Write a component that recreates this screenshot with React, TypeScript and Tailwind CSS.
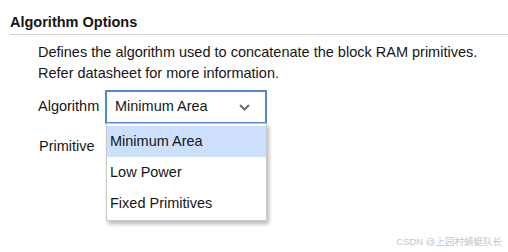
import { useState } from "react";

const options = ["Minimum Area", "Low Power", "Fixed Primitives"];

function Chevron() {
    return (
        <svg width="11" height="7" viewBox="0 0 11 7" fill="none">
            <path d="M1 1l4.5 4.5L10 1" stroke="#6b6b6b" strokeWidth="2" />
        </svg>
    );
}

export default function App() {
    const [algorithm] = useState("Minimum Area");

    return (
        <div className="relative w-[508px] h-[252px] bg-white text-[#161616] font-['Liberation_Sans',Arial,sans-serif] overflow-hidden">
            {/* Section header */}
            <div className="px-[10px] pt-[14px]">
                <h2 className="text-[14.5px] leading-[16px] font-bold">Algorithm Options</h2>
                <div className="mt-[4px] border-t border-[#d3d3d3] -mr-[10px]" />
            </div>

            <div className="pl-[38px] pt-[7px] text-[14.5px]">
                <p className="leading-[21px]">
                    Defines the algorithm used to concatenate the block RAM primitives.
                    <br />
                    Refer datasheet for more information.
                </p>

                <div className="mt-[6px] flex flex-col gap-[5px]">
                    {/* Algorithm row */}
                    <div className="flex items-center h-[34px]">
                        <span className="w-[67px] leading-none -mt-[2px]">Algorithm</span>
                        <div className="relative">
                            <div className="w-[162px] h-[34px] border-2 border-[#5585d8] bg-white flex items-center justify-between pl-[8px] pr-[15px]">
                                <span className="leading-none -mt-[2px]">{algorithm}</span>
                                <Chevron />
                            </div>

                            {/* Open list */}
                            <ul className="absolute left-[1px] top-[33px] w-[161px] bg-white border border-[#c9c9c9] pt-[2px] pb-[1px] shadow-[2px_3px_4px_rgba(0,0,0,0.28)] z-10">
                                {options.map((o) => (
                                    <li
                                        key={o}
                                        className={
                                            "h-[31px] flex items-center px-[3px] " +
                                            (o === algorithm ? "bg-[#cce0fb]" : "")
                                        }
                                    >
                                        {o}
                                    </li>
                                ))}
                            </ul>
                        </div>
                    </div>

                    {/* Primitive row */}
                    <div className="flex items-center h-[34px]">
                        <span className="w-[67px] pl-[1px] leading-none">Primitive</span>
                    </div>
                </div>
            </div>

            <div className="absolute right-[6px] bottom-[6px] text-[9.5px] leading-none text-[#c4c4c4] font-['Liberation_Sans','Noto_Sans_CJK_SC',sans-serif]">
                CSDN @上园村蜻蜓队长
            </div>
        </div>
    );
}
